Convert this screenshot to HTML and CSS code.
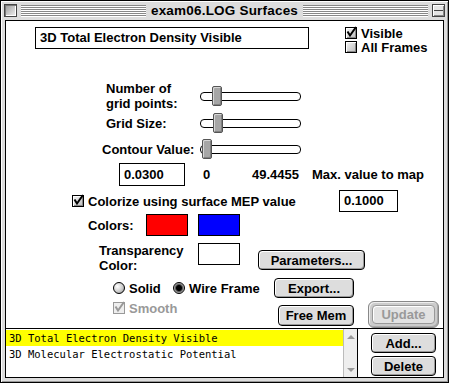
FILE: index.html
```html
<!DOCTYPE html>
<html>
<head>
<meta charset="utf-8">
<title>exam06.LOG Surfaces</title>
<link rel="stylesheet" href="styles.css">
</head>
<body>
<div class="window">
    <div class="titlebar">
        <span class="closebox"></span>
        <span class="stripes"></span>
        <span class="title">exam06.LOG Surfaces</span>
        <span class="stripes"></span>
        <span class="collapsebox"></span>
    </div>
    <div class="content">
        <div class="row-top">
            <div class="namefield">3D Total Electron Density Visible</div>
            <div class="viewopts">
                <div class="check"><span class="box"><svg viewBox="0 0 12 14" width="12" height="14"><path d="M2.5 6.5 L5 10.5 L11 2" fill="none" stroke="#000" stroke-width="2"/></svg></span>Visible</div>
                <div class="check"><span class="box"></span>All Frames</div>
            </div>
        </div>
        <div class="slider-row r1">
            <div class="lbl two">Number of<br>grid points:</div>
            <div class="slider"><span class="thumb" style="left: 11px"></span></div>
        </div>
        <div class="slider-row r2">
            <div class="lbl">Grid Size:</div>
            <div class="slider"><span class="thumb" style="left: 12px"></span></div>
        </div>
        <div class="slider-row r3">
            <div class="lbl contour">Contour Value:</div>
            <div class="slider"><span class="thumb" style="left: 1px"></span></div>
        </div>
        <div class="value-row">
            <div class="field contour-field">0.0300</div>
            <span class="minval">0</span>
            <span class="maxval">49.4455</span>
            <span>Max. value to map</span>
        </div>
        <div class="colorize-row">
            <div class="check colorize"><span class="box"><svg viewBox="0 0 12 14" width="12" height="14"><path d="M2.5 6.5 L5 10.5 L11 2" fill="none" stroke="#000" stroke-width="2"/></svg></span>Colorize using surface MEP value</div>
            <div class="field mep-field">0.1000</div>
        </div>
        <div class="colors-row">
            <span class="colors-lbl">Colors:</span>
            <span class="swatch red"></span>
            <span class="swatch blue"></span>
        </div>
        <div class="transp-row">
            <div class="transp-lbl">Transparency<br>Color:</div>
            <span class="swatch white"></span>
            <div class="btn params">Parameters...</div>
        </div>
        <div class="radio-row">
            <div class="radio-opt solid"><span class="radio"></span>Solid</div>
            <div class="radio-opt wire"><span class="radio on"></span>Wire Frame</div>
            <div class="btn export">Export...</div>
        </div>
        <div class="smooth-row">
            <div class="check smooth off"><span class="box"><svg viewBox="0 0 12 14" width="12" height="14"><path d="M2.5 6.5 L5 10.5 L11 2" fill="none" stroke="#999" stroke-width="2"/></svg></span>Smooth</div>
            <div class="btn freemem">Free Mem</div>
            <div class="ring"><div class="btn update">Update</div></div>
        </div>
        <div class="list-area">
            <div class="list">
                <div class="item selected">3D Total Electron Density Visible</div>
                <div class="item">3D Molecular Electrostatic Potential</div>
            </div>
            <div class="scroll">
                <span class="arrow up"></span>
                <span class="arrow down"></span>
            </div>
            <div class="list-btns">
                <div class="btn add">Add...</div>
                <div class="btn delete">Delete</div>
            </div>
        </div>
    </div>
</div>
</body>
</html>
```

FILE: styles.css
```css
body { margin: 0; background: #fff; font: bold 13px "Liberation Sans", Arial, sans-serif; color: #000; }

.window {
    width: 449px;
    height: 383px;
    box-sizing: border-box;
    border: 1px solid #000;
    background: #ddd;
    box-shadow: inset 1px 1px #fff, inset -1px -1px #999;
    display: flex;
    flex-direction: column;
}
.titlebar { height: 19px; flex: none; display: flex; align-items: center; padding: 0 3px 0 3px; }
.closebox, .collapsebox {
    width: 13px;
    height: 13px;
    box-sizing: border-box;
    border: 1px solid #444;
    flex: none;
}
.closebox { background: linear-gradient(135deg, #999, #f2f2f2); box-shadow: inset 1px 1px #777, inset -1px -1px #fff; margin-right: 4px; }
.collapsebox { background: linear-gradient(#e4e4e4 0 5px, #444 5px 6px, #e4e4e4 6px); box-shadow: inset 1px 1px #fff, inset -1px -1px #888; margin-left: 4px; }
.stripes { flex: 1; height: 12px; background: repeating-linear-gradient(#888 0 1px, #fff 1px 2px); }
.title { padding: 0 5px; font-size: 13.5px; letter-spacing: 0.2px; line-height: 19px; }

.content {
    flex: 1;
    margin: 0 4px 4px;
    border: 1px solid #000;
    background: #fff;
    display: flex;
    flex-direction: column;
}
.content > div { flex: none; display: flex; }

.row-top { height: 35px; }
.namefield {
    margin: 6px 0 0 29px;
    width: 274px;
    height: 22px;
    box-sizing: border-box;
    border: 1px solid #000;
    padding-left: 4px;
    line-height: 20px;
}
.viewopts { margin: 5px 0 0 36px; display: flex; flex-direction: column; }
.check { display: flex; align-items: center; height: 14px; }
.box {
    width: 12px;
    height: 12px;
    box-sizing: border-box;
    border: 1px solid #000;
    background: linear-gradient(135deg, #f6f6f6, #bbb);
    box-shadow: inset 1px 1px #fff, inset -1px -1px #888;
    position: relative;
    flex: none;
    margin-right: 4px;
}
.box svg { position: absolute; left: -1px; top: -3px; }
.check.off { color: #999; }
.check.off .box { border-color: #999; background: #eee; box-shadow: none; }

.slider-row { align-items: center; padding-left: 100px; }
.slider-row.r1 { margin-top: 26px; height: 28px; }
.slider-row.r2 { height: 26px; }
.slider-row.r3 { height: 27px; }
.lbl { width: 94px; line-height: 15px; }
.lbl.contour { margin-left: -4px; width: 98px; }
.slider {
    width: 101px;
    height: 9px;
    box-sizing: border-box;
    border: 1px solid #000;
    border-radius: 4px;
    background: #fff;
    position: relative;
}
.thumb {
    position: absolute;
    top: -7px;
    width: 10px;
    height: 20px;
    box-sizing: border-box;
    border: 1px solid #555;
    border-radius: 2px;
    background: #a6a6a6;
    box-shadow: inset 1px 1px #d6d6d6, inset -1px -1px #808080;
}

.field {
    height: 23px;
    box-sizing: border-box;
    border: 1px solid #000;
    padding-left: 4px;
    line-height: 21px;
}
.value-row { height: 23px; align-items: center; }
.contour-field { margin-left: 113px; width: 66px; }
.minval { margin-left: 18px; width: 49px; }
.maxval { width: 60px; }

.colorize-row { margin-top: 4px; height: 22px; align-items: center; padding-left: 66px; }
.colorize { width: 267px; }
.mep-field { width: 59px; height: 22px; line-height: 20px; }

.swatch { width: 42px; height: 22px; box-sizing: border-box; border: 1px solid #000; flex: none; }
.red { background: #ff0000; }
.blue { background: #0000ff; margin-left: 10px; }
.white { background: #fff; }
.colors-row { margin-top: 2px; height: 22px; align-items: center; padding-left: 82px; }
.colors-lbl { width: 58px; }

.transp-row { margin-top: 7px; height: 30px; align-items: flex-start; padding-left: 93px; }
.transp-lbl { width: 99px; line-height: 15px; }

.btn {
    height: 20px;
    box-sizing: border-box;
    border: 1px solid #000;
    border-radius: 4px;
    background: #ddd;
    box-shadow: inset 1px 1px #fff, inset -1px -1px #999;
    display: flex;
    align-items: center;
    justify-content: center;
    flex: none;
}
.params { width: 107px; margin: 7px 0 0 18px; }

.radio-row { margin-top: 5px; height: 20px; align-items: center; padding-left: 107px; }
.radio-opt { display: flex; align-items: center; }
.radio-opt.solid { width: 60px; }
.radio-opt.wire { width: 101px; }
.radio {
    width: 12px;
    height: 12px;
    box-sizing: border-box;
    border: 1px solid #000;
    border-radius: 50%;
    background: radial-gradient(circle at 35% 35%, #fff, #ccc 55%, #888);
    margin-right: 4px;
}
.radio.on { background: radial-gradient(circle, #000 0 2.5px, #555 3.5px, #bbb 5px); }
.export { width: 80px; }

.smooth-row { margin-top: 2px; height: 28px; align-items: flex-start; padding-left: 107px; }
.smooth { width: 165px; margin-top: 1px; }
.freemem { width: 76px; height: 21px; margin-top: 5px; }
.ring {
    width: 71px;
    height: 27px;
    box-sizing: border-box;
    margin: 1px 0 0 14px;
    border: 1px solid #888;
    border-radius: 6px;
    background: #ccc;
    box-shadow: inset 1px 1px #eee, inset -1px -1px #aaa;
    padding: 3px;
}
.update { height: 19px; border-color: #999; color: #999; box-shadow: inset 1px 1px #fff; background: #e2e2e2; }

.list-area { height: 48px; border-top: 1px solid #000; }
.list { width: 337px; padding-top: 1px; font: 10.5px "DejaVu Sans Mono", monospace; }
.item { height: 16px; line-height: 16px; padding-left: 3px; white-space: nowrap; overflow: hidden; }
.item.selected { background: #ffff00; }
.scroll {
    width: 15px;
    box-sizing: border-box;
    border-left: 1px solid #bbb;
    border-right: 1px solid #000;
    background: #eee;
    display: flex;
    flex-direction: column;
    justify-content: space-between;
    align-items: center;
    padding: 6px 0 5px;
}
.arrow { width: 0; height: 0; border-left: 4px solid transparent; border-right: 4px solid transparent; }
.arrow.up { border-bottom: 4px solid #999; }
.arrow.down { border-top: 4px solid #999; }
.list-btns { display: flex; flex-direction: column; padding-left: 13px; }
.add { width: 65px; margin-top: 4px; }
.delete { width: 65px; margin-top: 3px; }
```
